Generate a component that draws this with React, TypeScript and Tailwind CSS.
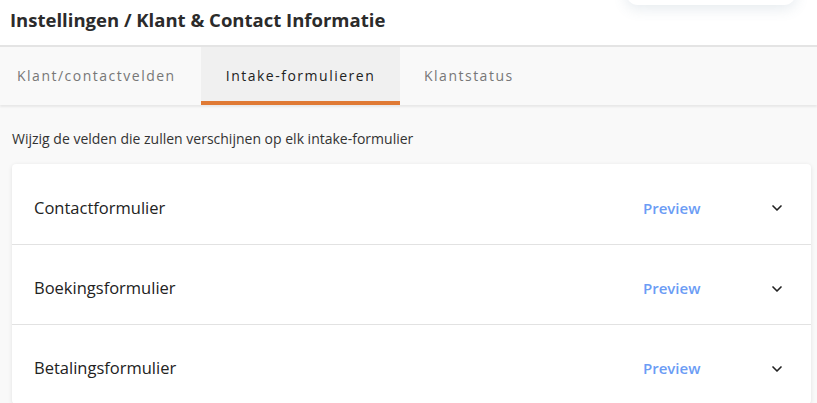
import React from 'react';
import { ChevronDown } from 'lucide-react';

const TABS = ['Klant/contactvelden', 'Intake-formulieren', 'Klantstatus'];
const FORMS = ['Contactformulier', 'Boekingsformulier', 'Betalingsformulier'];

export default function App() {
  const active = 1;

  return (
    <div className="h-[403px] w-[817px] overflow-hidden bg-[#f9f9f9] font-['Open_Sans',sans-serif]">
      {/* Header */}
      <div className="relative h-[45px] bg-white">
        <h1 className="pl-[10px] pt-[8px] text-[18.5px] font-bold leading-6 text-[#2b2b2b]">
          Instellingen / Klant &amp; Contact Informatie
        </h1>
        <div className="absolute left-[626px] top-[-40px] h-[45px] w-[170px] rounded-xl bg-white shadow-[0_4px_14px_rgba(80,110,140,0.14)]" />
      </div>

      {/* Tabs */}
      <div className="flex h-[60px] border-t-2 border-[#e4e4e4] bg-[#f9f9f9] shadow-[0_2px_2px_rgba(0,0,0,0.07)]">
        {TABS.map((t, i) => (
          <div
            key={t}
            className={`flex items-center border-b-4 text-[14px] tracking-[1.5px] ${
              i === active
                ? 'w-[199px] justify-center border-[#e07a35] bg-[#f0f0f0] font-medium text-[#222]'
                : 'border-transparent text-[#777]'
            } ${i === 0 ? 'w-[201px] pl-[17px]' : ''} ${i === 2 ? 'pl-[24px]' : ''}`}
          >
            <span className="pt-[3px]">{t}</span>
          </div>
        ))}
      </div>

      {/* Content */}
      <div className="px-[12px]">
        <p className="pt-[24px] text-[14px] leading-5 text-[#333]">
          Wijzig de velden die zullen verschijnen op elk intake-formulier
        </p>
        <div className="mt-[15px] w-[799px] rounded-[4px] bg-white shadow-[0_1px_4px_rgba(0,0,0,0.1)]">
          {FORMS.map((f, i) => (
            <div
              key={f}
              className={`flex h-[80px] items-center pt-[8px] ${i > 0 ? 'border-t border-[#e2e2e2]' : ''}`}
            >
              <span className="flex-1 pl-[22px] text-[16.5px] font-medium text-[#222]">{f}</span>
              <span className="w-[126px] text-[15px] font-semibold text-[#6b9cf5]">Preview</span>
              <ChevronDown size={16} strokeWidth={2.5} className="mr-[26px] text-[#222]" />
            </div>
          ))}
        </div>
      </div>
    </div>
  );
}
